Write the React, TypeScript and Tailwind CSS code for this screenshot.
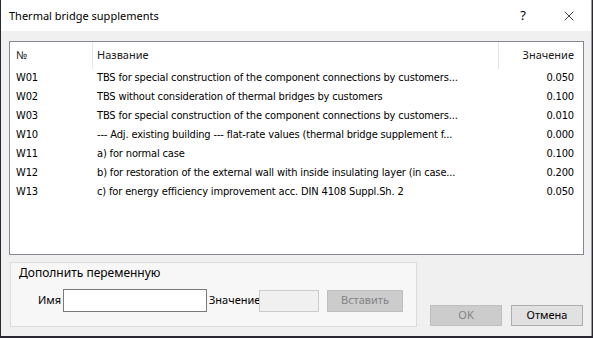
import { X } from 'lucide-react';

const rows = [
  { id: 'W01', name: 'TBS for special construction of the component connections by customers...', value: '0.050' },
  { id: 'W02', name: 'TBS without consideration of thermal bridges by customers', value: '0.100' },
  { id: 'W03', name: 'TBS for special construction of the component connections by customers...', value: '0.010' },
  { id: 'W10', name: '--- Adj. existing building --- flat-rate values (thermal bridge supplement f...', value: '0.000' },
  { id: 'W11', name: 'a) for normal case', value: '0.100' },
  { id: 'W12', name: 'b) for restoration of the external wall with inside insulating layer (in case...', value: '0.200' },
  { id: 'W13', name: 'c) for energy efficiency improvement acc. DIN 4108 Suppl.Sh. 2', value: '0.050' },
];

const ui = { fontFamily: '"Noto Sans", "Open Sans", sans-serif' };
const list = { fontFamily: '"DejaVu Sans Condensed", "DejaVu Sans", sans-serif' };

export default function App() {
  return (
    <div className="w-[593px] h-[338px] bg-[#2b2732] overflow-hidden">
      <div
        className="ml-[1px] w-[591px] h-[336px] bg-[#f0f0f0] border-r border-[#9a9a9a] flex flex-col text-black"
        style={ui}
      >
        {/* title bar */}
        <div className="h-[31px] bg-white flex items-center pl-[8px] shrink-0">
          <span className="text-[11px] leading-none">Thermal bridge supplements</span>
          <span className="ml-auto text-[13px] leading-none w-[20px] text-center mr-[28px]">?</span>
          <X className="w-[16px] h-[16px] mr-[14px]" strokeWidth={1.1} />
        </div>

        {/* list */}
        <div className="mt-[10px] ml-[8px] w-[575px] h-[214px] bg-white border border-[#828790] shrink-0">
          <div className="h-[27px] flex items-stretch text-[11px] text-[#1a1a1a]">
            <div className="w-[83px] flex items-center pl-[6px] border-r border-[#e5e5e5]">№</div>
            <div className="w-[406px] flex items-center pl-[4px] border-r border-[#e5e5e5]">Название</div>
            <div className="flex-1 flex items-center justify-end pr-[9px]">Значение</div>
          </div>
          <div className="text-[11px] tracking-[-0.15px]" style={list}>
            {rows.map((r) => (
              <div key={r.id} className="h-[19px] flex items-center">
                <div className="w-[83px] pl-[6px]">{r.id}</div>
                <div className="w-[406px] pl-[4px] whitespace-nowrap overflow-hidden">{r.name}</div>
                <div className="flex-1 text-right pr-[9px]">{r.value}</div>
              </div>
            ))}
          </div>
        </div>

        {/* bottom area */}
        <div className="flex items-end mt-[7px]">
          <div className="ml-[9px] w-[407px] h-[65px] bg-[#f7f7f7] border border-[#dcdcdc] flex flex-col">
            <div className="text-[12px] leading-none pl-[8px] pt-[4px]">Дополнить переменную</div>
            <div className="flex items-center mt-[10px] text-[11px]">
              <span className="w-[52px] text-right pr-[2px]">Имя</span>
              <div className="w-[144px] h-[23px] bg-white border border-[#7a7a7a]" />
              <span className="ml-[2px] w-[50px] whitespace-nowrap">Значение</span>
              <div className="w-[60px] h-[22px] bg-[#f0f0f0] border border-[#cccccc]" />
              <div className="ml-[8px] w-[76px] h-[22px] bg-[#cccccc] border border-[#bfbfbf] flex items-center justify-center text-[#838383]">
                Вставить
              </div>
            </div>
          </div>
          <div className="ml-[13px] mb-[1px] w-[72px] h-[21px] bg-[#cccccc] border border-[#bfbfbf] flex items-center justify-center text-[11px] text-[#838383]">
            OK
          </div>
          <div className="ml-[9px] mb-[1px] w-[72px] h-[21px] bg-[#e1e1e1] border border-[#adadad] flex items-center justify-center text-[11px]">
            Отмена
          </div>
        </div>
      </div>
    </div>
  );
}
